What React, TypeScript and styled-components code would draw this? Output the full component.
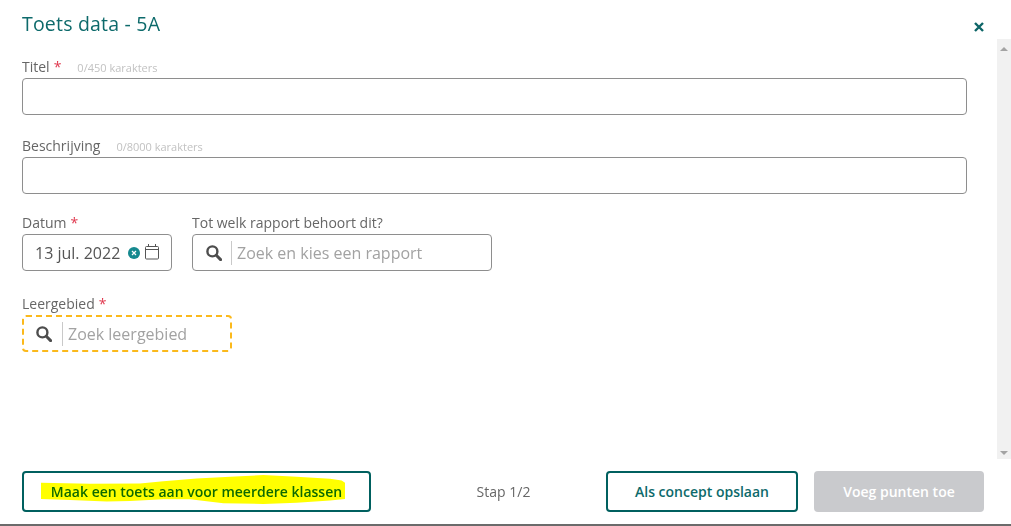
import { createGlobalStyle, styled } from 'styled-components'

const GlobalStyle = createGlobalStyle`
  html, body {
    margin: 0;
    padding: 0;
    background: #fff;
    overflow: hidden;
  }
  body {
    font-family: 'Open Sans', 'Liberation Sans', sans-serif;
  }
`

const Modal = styled.div`
  width: 1011px;
  height: 526px;
  box-sizing: border-box;
  border-bottom: 2px solid #6b6b6b;
  display: flex;
  flex-direction: column;
  background: #fff;
`

const Header = styled.header`
  height: 39px;
  flex: none;
  display: flex;
  justify-content: space-between;
  padding: 11px 25px 0 22px;
  box-sizing: border-box;
`

const Title = styled.h1`
  margin: 0;
  font-size: 19.5px;
  line-height: 25px;
  font-weight: 400;
  color: #0d6a6b;
  letter-spacing: 0.2px;
`

const CloseButton = styled.button`
  width: 14px;
  height: 14px;
  margin-top: 9px;
  padding: 0;
  border: 0;
  background: none;
  display: flex;
  align-items: center;
  justify-content: center;
  color: #0d6567;
`

const Content = styled.div`
  height: 420px;
  flex: none;
  display: flex;
`

const Form = styled.div`
  width: 997px;
  box-sizing: border-box;
  padding: 18px 30px 0 22px;
  display: flex;
  flex-direction: column;
  gap: 21px;
`

const Row = styled.div`
  display: flex;
  gap: 20px;
  margin: -2px 0 2px;
`

const Field = styled.div<{ $width?: number }>`
  width: ${p => (p.$width ? `${p.$width}px` : '100%')};
  display: flex;
  flex-direction: column;
`

const Label = styled.label`
  height: 21px;
  font-size: 14px;
  line-height: 20px;
  color: #666;
  white-space: nowrap;
`

const Required = styled.span`
  color: #e0394f;
  margin-left: 4px;
`

const Counter = styled.span`
  font-size: 11px;
  color: #c2c2c2;
  margin-left: 16px;
`

const InputBox = styled.div<{ $highlighted?: boolean }>`
  height: 37px;
  box-sizing: border-box;
  border: ${p => (p.$highlighted ? '2px dashed #fbb91c' : '1px solid #8e8e8e')};
  border-radius: 4px;
  display: flex;
  align-items: center;
  font-size: 16px;
  color: #555;
`

const DateValue = styled.span`
  margin-left: 12px;
  white-space: nowrap;
`

const ClearBadge = styled.span`
  width: 12px;
  height: 12px;
  margin-left: 8px;
  border-radius: 50%;
  background: #16898f;
  color: #fff;
  display: flex;
  align-items: center;
  justify-content: center;
  flex: none;
`

const CalendarIcon = styled.svg`
  width: 14px;
  height: 17px;
  margin: -3px 0 0 5px;
  flex: none;
  color: #555;
`

const SearchIconBox = styled.span<{ $wide?: boolean }>`
  width: 39px;
  height: 24px;
  box-sizing: border-box;
  border-right: 1px solid #c9c9c9;
  display: flex;
  align-items: center;
  justify-content: center;
  flex: none;
  padding-left: ${p => (p.$wide ? 4 : 2)}px;
`

const Placeholder = styled.span`
  margin-left: 5px;
  color: #a2a2a2;
  white-space: nowrap;
`

const Scrollbar = styled.div`
  width: 14px;
  background: #f1f1f1;
  display: flex;
  flex-direction: column;
  justify-content: space-between;
  align-items: center;
  padding: 8px 0 4px;
  box-sizing: border-box;
`

const Arrow = styled.span<{ $down?: boolean }>`
  width: 0;
  height: 0;
  border-left: 4px solid transparent;
  border-right: 4px solid transparent;
  ${p => (p.$down ? 'border-top: 4px solid #a3a3a3;' : 'border-bottom: 4px solid #a3a3a3;')}
`

const Footer = styled.footer`
  flex: 1;
  display: flex;
  align-items: flex-start;
  padding: 12px 27px 0 22px;
`

const Button = styled.button<{ $width: number; $disabled?: boolean }>`
  position: relative;
  width: ${p => p.$width}px;
  height: 41px;
  flex: none;
  box-sizing: border-box;
  border: ${p => (p.$disabled ? '0' : '2px solid #00605f')};
  border-radius: 4px;
  background: ${p => (p.$disabled ? '#c9cacd' : '#fff')};
  color: ${p => (p.$disabled ? '#fff' : '#0d6a6b')};
  font-family: inherit;
  font-size: 14px;
  font-weight: 600;
  padding: 0;
`

const ButtonText = styled.span`
  white-space: nowrap;
`

const Highlight = styled.svg`
  position: absolute;
  left: 17px;
  top: 2px;
  width: 304px;
  height: 29px;
  mix-blend-mode: multiply;
`

const Step = styled.span`
  width: 235px;
  flex: none;
  height: 41px;
  box-sizing: border-box;
  padding-left: 30px;
  line-height: 41px;
  text-align: center;
  font-size: 14px;
  color: #666;
`

const Spacer = styled.span`
  width: 16px;
  flex: none;
`

const SearchIcon = () => (
  <svg width="16" height="16" viewBox="0 0 16 16" fill="none" stroke="#4d4d4d">
    <circle cx="6.4" cy="6.4" r="5" strokeWidth="2.4" />
    <path d="M10.3 10.3 14.6 14.6" strokeWidth="3" strokeLinecap="round" />
  </svg>
)

export default function App() {
  return (
    <>
      <GlobalStyle />
      <Modal>
        <Header>
          <Title>Toets data - 5A</Title>
          <CloseButton type="button" aria-label="Sluiten">
            <svg width="10" height="10" viewBox="0 0 10 10" fill="none" stroke="currentColor" strokeWidth="2.4">
              <path d="M1 1 9 9M9 1 1 9" />
            </svg>
          </CloseButton>
        </Header>

        <Content>
          <Form>
            <Field>
              <Label>
                Titel<Required>*</Required>
                <Counter>0/450 karakters</Counter>
              </Label>
              <InputBox />
            </Field>
            <Field>
              <Label>
                Beschrijving<Counter>0/8000 karakters</Counter>
              </Label>
              <InputBox />
            </Field>
            <Row>
              <Field $width={150}>
                <Label>
                  Datum<Required>*</Required>
                </Label>
                <InputBox>
                  <DateValue>13 jul. 2022</DateValue>
                  <ClearBadge>
                    <svg width="6" height="6" viewBox="0 0 6 6" fill="none" stroke="currentColor" strokeWidth="1.2">
                      <path d="M1 1 5 5M5 1 1 5" />
                    </svg>
                  </ClearBadge>
                  <CalendarIcon viewBox="0 0 14 17" fill="none" stroke="currentColor" strokeWidth="1">
                    <rect x="0.5" y="3.5" width="13" height="12.5" rx="1" />
                    <path d="M0.5 6.5H13.5M3.5 1V4M10.5 1V4" />
                  </CalendarIcon>
                </InputBox>
              </Field>
              <Field $width={300}>
                <Label>Tot welk rapport behoort dit?</Label>
                <InputBox>
                  <SearchIconBox $wide>
                    <SearchIcon />
                  </SearchIconBox>
                  <Placeholder>Zoek en kies een rapport</Placeholder>
                </InputBox>
              </Field>
            </Row>
            <Field $width={210}>
              <Label>
                Leergebied<Required>*</Required>
              </Label>
              <InputBox $highlighted>
                <SearchIconBox>
                  <SearchIcon />
                </SearchIconBox>
                <Placeholder>Zoek leergebied</Placeholder>
              </InputBox>
            </Field>
          </Form>
          <Scrollbar>
            <Arrow />
            <Arrow $down />
          </Scrollbar>
        </Content>

        <Footer>
          <Button type="button" $width={349}>
            <ButtonText>Maak een toets aan voor meerdere klassen</ButtonText>
            <Highlight viewBox="33 22 912 85" preserveAspectRatio="none">
              <path
                d="M33 45 L180 48 L330 47 L400 40 L500 32 L600 27 L700 22 L800 27 L900 33 L935 38 L945 45 L945 92 L900 97 L800 103 L700 107 L580 105 L480 93 L400 93 L300 98 L230 100 L120 95 L33 92 Z"
                fill="#ffff00"
              />
            </Highlight>
          </Button>
          <Step>Stap 1/2</Step>
          <Button type="button" $width={192}>
            Als concept opslaan
          </Button>
          <Spacer />
          <Button type="button" $width={170} $disabled>
            Voeg punten toe
          </Button>
        </Footer>
      </Modal>
    </>
  )
}
